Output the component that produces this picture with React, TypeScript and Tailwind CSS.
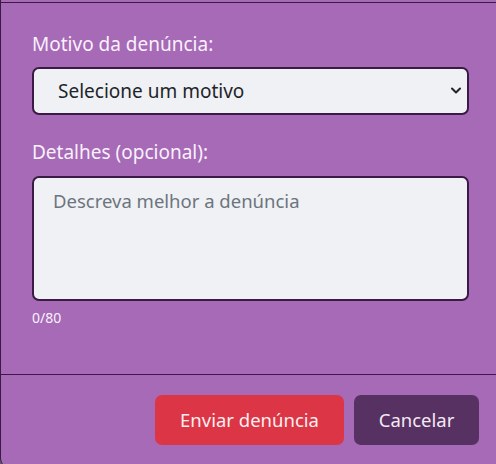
import React from 'react';

export default function App() {
  const font = { fontFamily: '"Noto Sans", "Open Sans", sans-serif' };

  return (
    <div className="h-[464px] w-[496px] overflow-hidden bg-[#5e5e5e]" style={font}>
      <div className="w-[502px] h-[468px] bg-[#a66ab6] border-l border-[#3b1a45] rounded-b-[10px] flex flex-col">
        {/* header edge */}
        <div className="h-[3px] border-b border-[#3b1a45]" />

        {/* body */}
        <div className="flex flex-col pl-[31px] pr-[37px] pt-[28px] h-[372px] border-b border-[#3b1a45]">
          <label className="text-[19px] leading-[27px] text-[#f9f1fb]">Motivo da denúncia:</label>
          <div className="relative mt-[9px] w-[437px]">
            <select className="appearance-none w-full h-[48px] rounded-[7px] border-2 border-[#3b1a45] bg-[#f0f1f5] pl-[24px] text-[19px] text-[#212529] outline-none">
              <option>Selecione um motivo</option>
            </select>
            <svg className="absolute right-[7px] top-[19px] pointer-events-none" width="12" height="10" viewBox="0 0 12 10" fill="none">
              <path d="M2 2.5 L6 6.5 L10 2.5" stroke="#212529" strokeWidth="2" strokeLinecap="round" strokeLinejoin="round" />
            </svg>
          </div>

          <label className="mt-[24px] text-[19px] leading-[27px] text-[#f9f1fb]">Detalhes (opcional):</label>
          <textarea
            className="mt-[10px] w-[437px] h-[125px] resize-none rounded-[7px] border-2 border-[#3b1a45] bg-[#f0f1f5] px-[19px] pt-[9px] text-[18.5px] leading-[27px] text-[#212529] placeholder:text-[#6c757d] outline-none"
            placeholder="Descreva melhor a denúncia"
          />
          <span className="mt-[7px] text-[14px] leading-[20px] text-[#f9f1fb]">0/80</span>
        </div>

        {/* footer */}
        <div className="flex justify-start gap-[10px] pl-[154px] pt-[20px]">
          <button className="h-[50px] w-[189px] rounded-[7px] bg-[#dc3545] text-[18.5px] text-[#fbeef0]">
            Enviar denúncia
          </button>
          <button className="h-[50px] w-[125px] rounded-[7px] bg-[#573161] text-[18.5px] text-[#f3eaf5]">
            Cancelar
          </button>
        </div>
      </div>
    </div>
  );
}
